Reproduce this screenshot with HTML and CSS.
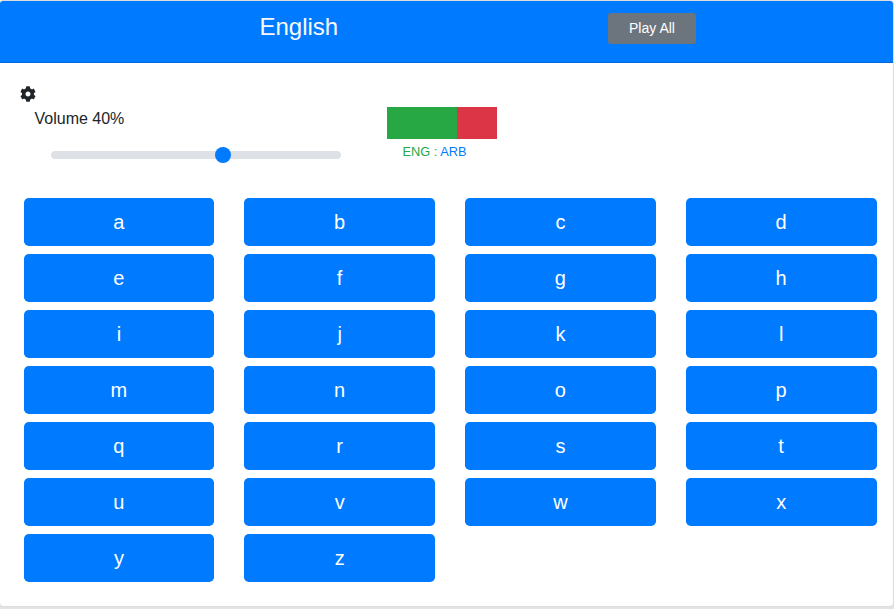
FILE: index.html
```html
<!DOCTYPE html>
<html lang="en">
<head>
<meta charset="utf-8">
<title>English</title>
<link rel="stylesheet" href="styles.css">
</head>
<body>
<main class="card">
  <header class="card-header">
    <h1 class="title">English</h1>
    <button class="play-all" type="button">Play All</button>
  </header>
  <section class="settings">
    <div class="volume">
      <svg class="gear" viewBox="0 0 512 512" aria-hidden="true"><path fill="currentColor" d="M487.400 315.700l-42.600-24.600c4.300-23.200 4.300-47 0-70.200l42.600-24.600c4.900-2.800 7.100-8.600 5.500-14-11.100-35.600-30-67.800-54.700-94.600-3.800-4.100-10-5.100-14.800-2.300L380.800 110c-17.900-15.400-38.500-27.300-60.800-35.100V25.800c0-5.600-3.900-10.500-9.400-11.700-36.700-8.200-74.300-7.800-109.200 0-5.500 1.200-9.400 6.100-9.400 11.700V75c-22.200 7.900-42.800 19.800-60.800 35.100L88.700 85.500c-4.900-2.800-11-1.900-14.800 2.300-24.700 26.700-43.600 58.900-54.700 94.600-1.700 5.400.6 11.200 5.500 14L67.300 221c-4.300 23.200-4.300 47 0 70.200l-42.600 24.600c-4.900 2.800-7.100 8.600-5.500 14 11.100 35.600 30 67.800 54.700 94.600 3.800 4.100 10 5.100 14.800 2.300l42.600-24.600c17.900 15.400 38.500 27.300 60.800 35.100v49.200c0 5.600 3.900 10.500 9.400 11.700 36.700 8.200 74.300 7.800 109.200 0 5.500-1.200 9.400-6.100 9.400-11.700v-49.200c22.200-7.900 42.800-19.800 60.800-35.100l42.600 24.600c4.900 2.800 11 1.900 14.800-2.300 24.700-26.700 43.600-58.900 54.700-94.600 1.500-5.500-.7-11.300-5.600-14.100zM256 336c-44.100 0-80-35.900-80-80s35.900-80 80-80 80 35.900 80 80-35.900 80-80 80z"/></svg>
      <label class="volume-label" for="volume">Volume 40%</label>
      <input class="range" id="volume" type="range" min="0" max="100" value="60">
    </div>
    <div class="language">
      <div class="split"><span class="split-green"></span><span class="split-red"></span></div>
      <div class="pair"><span class="eng">ENG :</span> <span class="arb">ARB</span></div>
    </div>
  </section>
  <section class="letters">
    <button>a</button><button>b</button><button>c</button><button>d</button>
    <button>e</button><button>f</button><button>g</button><button>h</button>
    <button>i</button><button>j</button><button>k</button><button>l</button>
    <button>m</button><button>n</button><button>o</button><button>p</button>
    <button>q</button><button>r</button><button>s</button><button>t</button>
    <button>u</button><button>v</button><button>w</button><button>x</button>
    <button>y</button><button>z</button>
  </section>
</main>
</body>
</html>
```
FILE: styles.css
```css
* {
  box-sizing: border-box;
}

html {
  background: #fff;
}

body {
  height: 609px;
  margin: 0;
  background: linear-gradient(#fff 603px, #dedede 603px, #e4e4e4 609px);
  color: #212529;
  font: 16px/24px "Liberation Sans", Arial, sans-serif;
}

button {
  border: 0;
  color: #fff;
  font-family: inherit;
}

.card {
  width: 895px;
  height: 607px;
  margin-left: -1px;
  border: 1px solid #dcdcdc;
  border-radius: 4px;
  background: #fff;
}

.card-header {
  display: flex;
  align-items: flex-start;
  height: 62px;
  padding: 12px 0 0 259.5px;
  border-bottom: 1px solid #0069d9;
  border-radius: 3px 3px 0 0;
  background: #007bff;
}

.title {
  width: 348.5px;
  margin: -1px 0 0;
  color: #f8f9fa;
  font-size: 24px;
  font-weight: 400;
  line-height: 29px;
}

.play-all {
  width: 88px;
  height: 31px;
  padding: 0;
  border-radius: 3px;
  background: #6c757d;
  font-size: 14px;
  line-height: 21px;
}

.settings {
  display: flex;
  height: 135px;
  padding: 23px 0 0 20px;
}

.volume {
  display: flex;
  flex-direction: column;
  width: 367px;
}

.gear {
  width: 16px;
  height: 16px;
}

.volume-label {
  margin: 5px 0 0 14.5px;
}

.range {
  width: 290px;
  height: 24px;
  margin: 12px 0 0 31px;
  appearance: none;
  background: transparent;
}

.range::-webkit-slider-runnable-track {
  height: 8px;
  border-radius: 8px;
  background: #dee2e6;
}

.range::-webkit-slider-thumb {
  width: 16px;
  height: 16px;
  margin-top: -4px;
  border-radius: 50%;
  appearance: none;
  background: #007bff;
}

.language {
  width: 110px;
  padding-top: 21px;
}

.split {
  display: flex;
  height: 32px;
}

.split-green {
  width: 70px;
  background: #28a745;
}

.split-red {
  width: 40px;
  background: #dc3545;
}

.pair {
  padding: 3px 0 0 15.5px;
  font-size: 12.8px;
  line-height: 20px;
}

.eng {
  color: #28a745;
}

.arb {
  color: #007bff;
}

.letters {
  display: grid;
  grid-template-columns: repeat(4, 190.75px);
  gap: 8px 30px;
  padding-left: 23.5px;
}

.letters button {
  height: 48px;
  padding: 0;
  border-radius: 4.8px;
  background: #007bff;
  font-size: 20px;
  line-height: 30px;
}
```
